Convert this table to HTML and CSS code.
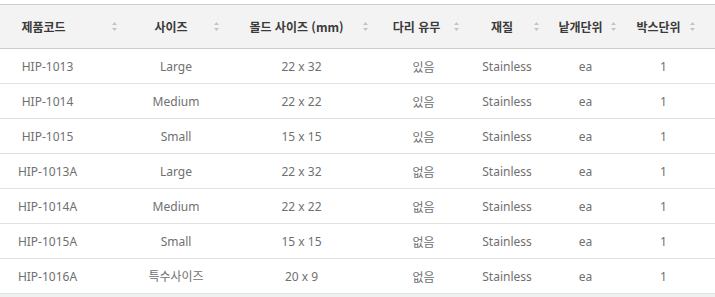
FILE: index.html
```html
<!DOCTYPE html>
<html lang="ko">
<head>
<meta charset="utf-8">
<title>제품 규격</title>
<link rel="stylesheet" href="styles.css">
</head>
<body>
<div class="wrap">
<table class="spec">
  <colgroup>
    <col class="c1"><col class="c2"><col class="c3"><col class="c4"><col class="c5"><col class="c6"><col class="c7"><col class="c8">
  </colgroup>
  <thead>
    <tr>
      <th class="first">제품코드<svg class="sort" width="7" height="11" viewBox="0 0 7 11"><path d="M3.5 1 L6 4 L1 4 Z M1 7 L6 7 L3.5 10 Z" fill="#c4c4c4"/></svg></th>
      <th>사이즈<svg class="sort" width="7" height="11" viewBox="0 0 7 11"><path d="M3.5 1 L6 4 L1 4 Z M1 7 L6 7 L3.5 10 Z" fill="#c4c4c4"/></svg></th>
      <th>몰드 사이즈 (mm)<svg class="sort" width="7" height="11" viewBox="0 0 7 11"><path d="M3.5 1 L6 4 L1 4 Z M1 7 L6 7 L3.5 10 Z" fill="#c4c4c4"/></svg></th>
      <th>다리 유무<svg class="sort" width="7" height="11" viewBox="0 0 7 11"><path d="M3.5 1 L6 4 L1 4 Z M1 7 L6 7 L3.5 10 Z" fill="#c4c4c4"/></svg></th>
      <th>재질<svg class="sort" width="7" height="11" viewBox="0 0 7 11"><path d="M3.5 1 L6 4 L1 4 Z M1 7 L6 7 L3.5 10 Z" fill="#c4c4c4"/></svg></th>
      <th>낱개단위<svg class="sort" width="7" height="11" viewBox="0 0 7 11"><path d="M3.5 1 L6 4 L1 4 Z M1 7 L6 7 L3.5 10 Z" fill="#c4c4c4"/></svg></th>
      <th>박스단위<svg class="sort" width="7" height="11" viewBox="0 0 7 11"><path d="M3.5 1 L6 4 L1 4 Z M1 7 L6 7 L3.5 10 Z" fill="#c4c4c4"/></svg></th>
      <th class="filler"></th>
    </tr>
  </thead>
  <tbody>
    <tr><td class="first">HIP-1013</td><td>Large</td><td>22 x 32</td><td class="kr">있음</td><td>Stainless</td><td>ea</td><td>1</td><td></td></tr>
    <tr><td class="first">HIP-1014</td><td>Medium</td><td>22 x 22</td><td class="kr">있음</td><td>Stainless</td><td>ea</td><td>1</td><td></td></tr>
    <tr><td class="first">HIP-1015</td><td>Small</td><td>15 x 15</td><td class="kr">있음</td><td>Stainless</td><td>ea</td><td>1</td><td></td></tr>
    <tr><td class="first">HIP-1013A</td><td>Large</td><td>22 x 32</td><td class="kr">없음</td><td>Stainless</td><td>ea</td><td>1</td><td></td></tr>
    <tr><td class="first">HIP-1014A</td><td>Medium</td><td>22 x 22</td><td class="kr">없음</td><td>Stainless</td><td>ea</td><td>1</td><td></td></tr>
    <tr><td class="first">HIP-1015A</td><td>Small</td><td>15 x 15</td><td class="kr">없음</td><td>Stainless</td><td>ea</td><td>1</td><td></td></tr>
    <tr><td class="first">HIP-1016A</td><td>특수사이즈</td><td>20 x 9</td><td class="kr">없음</td><td>Stainless</td><td>ea</td><td>1</td><td></td></tr>
  </tbody>
</table>
<div class="foot"></div>
</div>
</body>
</html>
```
FILE: styles.css
```css
html, body {
  margin: 0;
  padding: 0;
  background: #ffffff;
}
.wrap {
  padding-top: 4px;
  font-family: "Noto Sans", "Noto Sans CJK KR", sans-serif;
}
.spec {
  width: 715px;
  border-collapse: collapse;
  table-layout: fixed;
}
.c1 { width: 125px; }
.c2 { width: 102px; }
.c3 { width: 149px; }
.c4 { width: 91px; }
.c5 { width: 80px; }
.c6 { width: 77px; }
.c7 { width: 79px; }
.c8 { width: 12px; }

.spec thead tr {
  background: #f3f3f3;
}
.spec th {
  position: relative;
  height: 44px;
  padding: 0 18px 0 8px;
  border-top: 1px solid #cfcfcf;
  border-bottom: 1px solid #cccccc;
  font-family: "Noto Sans CJK KR", sans-serif;
  font-size: 12px;
  font-weight: 700;
  color: #3a3a3a;
  text-align: center;
  white-space: nowrap;
  box-sizing: border-box;
}
.spec th.first {
  padding-left: 0;
  padding-right: 38px;
}
.spec th.filler {
  padding: 0;
}
.sort {
  position: absolute;
  right: 7px;
  top: 50%;
  margin-top: -6px;
}
.spec td {
  height: 35px;
  box-sizing: border-box;
  padding: 0 6px;
  border-bottom: 1px solid #e2e2e2;
  font-size: 12px;
  color: #707070;
  text-align: center;
  white-space: nowrap;
}
.spec td.first {
  padding-left: 0;
  padding-right: 30px;
}
.spec td.kr {
  font-family: "Noto Sans CJK KR", sans-serif;
  padding-left: 4px;
  padding-right: 0;
}
.foot {
  height: 6px;
  background: #eef1f0;
}
```
